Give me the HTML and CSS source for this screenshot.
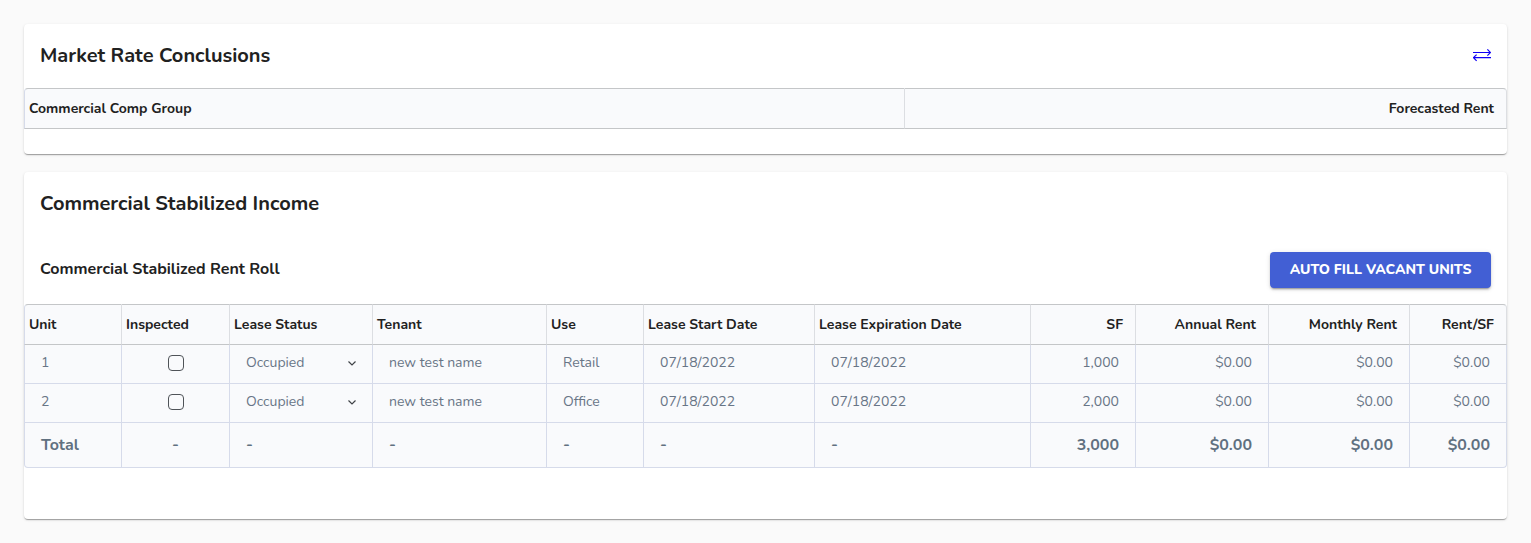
FILE: index.html
```html
<!DOCTYPE html>
<html lang="en">
<head>
<meta charset="utf-8">
<meta name="viewport" content="width=device-width, initial-scale=1">
<title>Commercial Stabilized Income</title>
<link rel="stylesheet" href="styles.css">
</head>
<body>
<main class="page">
  <section class="card">
    <header class="card-header">
      <h1 class="card-title">Market Rate Conclusions</h1>
      <button class="icon-button" type="button" aria-label="Swap rows and columns">
        <svg class="swap-icon" width="18" height="14" viewBox="0 0 18 14" aria-hidden="true">
          <path d="M0 3.500H17.500M14.400 .4L17.500 3.500L14.400 6.600M18 8.700H.5M3.600 5.600L.5 8.700L3.600 11.800"/>
        </svg>
      </button>
    </header>
    <table class="grid">
      <colgroup><col class="w-group"><col class="w-forecast"></colgroup>
      <thead>
        <tr><th scope="col">Commercial Comp Group</th><th scope="col" class="num">Forecasted Rent</th></tr>
      </thead>
    </table>
  </section>

  <section class="card card-income">
    <header class="card-header">
      <h1 class="card-title">Commercial Stabilized Income</h1>
    </header>
    <div class="toolbar">
      <h2 class="subtitle">Commercial Stabilized Rent Roll</h2>
      <button class="primary-button" type="button">AUTO FILL VACANT UNITS</button>
    </div>
    <table class="grid">
      <colgroup>
        <col class="w-unit"><col class="w-inspected"><col class="w-status"><col class="w-tenant"><col class="w-use"><col class="w-start"><col class="w-end"><col class="w-sf"><col class="w-annual"><col class="w-monthly"><col class="w-rate">
      </colgroup>
      <thead>
        <tr>
          <th scope="col">Unit</th>
          <th scope="col">Inspected</th>
          <th scope="col">Lease Status</th>
          <th scope="col">Tenant</th>
          <th scope="col">Use</th>
          <th scope="col">Lease Start Date</th>
          <th scope="col">Lease Expiration Date</th>
          <th scope="col" class="num">SF</th>
          <th scope="col" class="num">Annual Rent</th>
          <th scope="col" class="num">Monthly Rent</th>
          <th scope="col" class="num">Rent/SF</th>
        </tr>
      </thead>
      <tbody>
        <tr>
          <td>1</td>
          <td class="center"><input class="check" type="checkbox" aria-label="Unit 1 inspected"></td>
          <td>
            <div class="select-wrap">
              <select class="select" aria-label="Unit 1 lease status"><option>Occupied</option><option>Vacant</option></select>
              <svg class="chevron" width="8" height="5" viewBox="0 0 8 5" aria-hidden="true"><path d="M.5 .5L4 4L7.500 .5"/></svg>
            </div>
          </td>
          <td>new test name</td>
          <td>Retail</td>
          <td>07/18/2022</td>
          <td>07/18/2022</td>
          <td class="num">1,000</td>
          <td class="num">$0.00</td>
          <td class="num">$0.00</td>
          <td class="num">$0.00</td>
        </tr>
        <tr>
          <td>2</td>
          <td class="center"><input class="check" type="checkbox" aria-label="Unit 2 inspected"></td>
          <td>
            <div class="select-wrap">
              <select class="select" aria-label="Unit 2 lease status"><option>Occupied</option><option>Vacant</option></select>
              <svg class="chevron" width="8" height="5" viewBox="0 0 8 5" aria-hidden="true"><path d="M.5 .5L4 4L7.500 .5"/></svg>
            </div>
          </td>
          <td>new test name</td>
          <td>Office</td>
          <td>07/18/2022</td>
          <td>07/18/2022</td>
          <td class="num">2,000</td>
          <td class="num">$0.00</td>
          <td class="num">$0.00</td>
          <td class="num">$0.00</td>
        </tr>
      </tbody>
      <tfoot>
        <tr>
          <td>Total</td>
          <td class="center">-</td>
          <td>-</td>
          <td>-</td>
          <td>-</td>
          <td>-</td>
          <td>-</td>
          <td class="num">3,000</td>
          <td class="num">$0.00</td>
          <td class="num">$0.00</td>
          <td class="num">$0.00</td>
        </tr>
      </tfoot>
    </table>
  </section>
</main>
</body>
</html>
```
FILE: styles.css
```css
* {
  box-sizing: border-box;
}

body {
  margin: 0;
  background: #fafafa;
  color: #212121;
  font-family: Nunito, "Open Sans", "Noto Sans", sans-serif;
  font-size: 14px;
  line-height: 20px;
}

.page {
  display: flex;
  flex-direction: column;
  gap: 18px;
  padding: 24px;
}

.card {
  padding-bottom: 25px;
  border-radius: 4px;
  background: #fff;
  box-shadow: 0 2px 1px -1px rgba(0, 0, 0, 0.2), 0 1px 1px rgba(0, 0, 0, 0.14), 0 1px 3px rgba(0, 0, 0, 0.12);
}

.card-income {
  padding-bottom: 51px;
}

.card-header,
.toolbar {
  display: flex;
  align-items: center;
  justify-content: space-between;
  padding: 16px;
}

.card-header {
  height: 64px;
}

.card-title,
.subtitle {
  margin: 0;
  font-weight: 700;
}

.card-title {
  font-size: 20px;
  line-height: 32px;
}

.subtitle {
  padding-bottom: 2px;
  font-size: 16px;
  line-height: 24px;
}

.icon-button {
  display: flex;
  padding: 0;
  border: 0;
  background: none;
  color: #0f00f5;
  cursor: pointer;
}

.swap-icon,
.chevron {
  fill: none;
  stroke: currentColor;
}

.swap-icon {
  stroke-width: 1.2;
}

.primary-button {
  min-width: 221px;
  height: 36px;
  padding: 0 16px;
  border: 0;
  border-radius: 4px;
  background: #425fd4;
  box-shadow: 0 3px 1px -2px rgba(0, 0, 0, 0.2), 0 2px 2px rgba(0, 0, 0, 0.14), 0 1px 5px rgba(0, 0, 0, 0.12);
  color: #fff;
  font: inherit;
  font-weight: 800;
  cursor: pointer;
}

.grid {
  width: 100%;
  border-collapse: separate;
  border-spacing: 0;
  table-layout: fixed;
}

.w-group { width: 881px; }
.w-forecast { width: 602px; }
.w-unit { width: 98px; }
.w-inspected { width: 108px; }
.w-status { width: 143px; }
.w-tenant { width: 174px; }
.w-use { width: 97px; }
.w-start { width: 171px; }
.w-end { width: 216px; }
.w-sf { width: 105px; }
.w-annual { width: 133px; }
.w-monthly { width: 141px; }
.w-rate { width: 97px; }

.grid th,
.grid td {
  border: 0 solid #d6dbea;
  border-width: 0 1px 1px 0;
  background: #f9fafc;
  text-align: left;
  white-space: nowrap;
}

.grid th {
  height: 41px;
  padding: 0 12px 0 4px;
  border-color: #c4c6c8 #dcdee2 #c4c6c8 #d6dbea;
  border-top-width: 1px;
  font-size: 14px;
  font-weight: 700;
}

.grid td {
  height: 39px;
  padding: 0 16px 2px;
  color: #687586;
}

.grid th:first-child,
.grid td:first-child {
  border-left-width: 1px;
}

.grid th:first-child {
  border-top-left-radius: 4px;
}

.grid th:last-child {
  border-top-right-radius: 4px;
}

.grid tfoot td {
  height: 45px;
  padding-bottom: 0;
  color: #607080;
  font-size: 16px;
  font-weight: 700;
}

.grid tfoot td:first-child {
  border-bottom-left-radius: 4px;
}

.grid tfoot td:last-child {
  border-bottom-right-radius: 4px;
}

.grid .num {
  text-align: right;
}

.grid .center {
  text-align: center;
}

.check {
  display: block;
  width: 16px;
  height: 16px;
  margin: 0 auto;
  border: 1px solid #4f5358;
  border-radius: 4px;
  appearance: none;
}

.check:checked {
  background: #425fd4;
}

.select-wrap {
  display: grid;
  align-items: center;
}

.select {
  grid-area: 1 / 1;
  width: 100%;
  padding: 0;
  border: 0;
  background: none;
  color: inherit;
  font: inherit;
  appearance: none;
}

.chevron {
  grid-area: 1 / 1;
  justify-self: end;
  color: #404347;
  stroke-width: 1.2;
  pointer-events: none;
}
```
